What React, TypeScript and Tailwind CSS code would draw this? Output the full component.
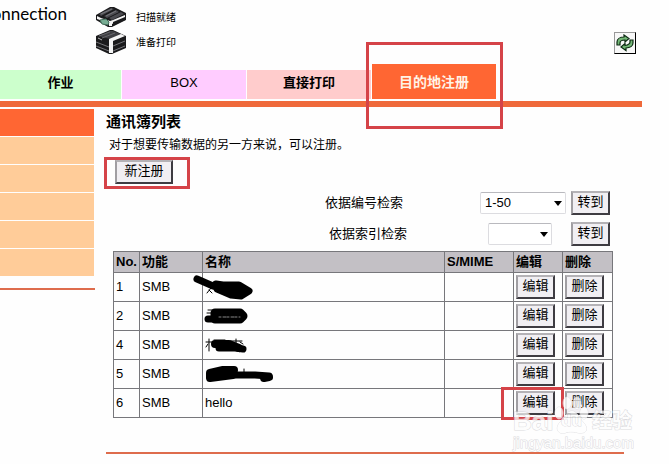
import React from "react";

const BEVEL =
  "border-2 border-t-[#b4b2b6] border-l-[#a09ea2] border-r-[#3e3c42] border-b-[#3e3c42] bg-[#f1eff3] text-[13px] leading-[18px] text-black";

function BevelButton({ children, className = "" }: { children: React.ReactNode; className?: string }) {
  return (
    <button type="button" className={`${BEVEL} h-6 shrink-0 ${className}`}>
      <span className="block h-5 leading-[17px]">{children}</span>
    </button>
  );
}

function ScannerIcon() {
  return (
    <svg width="30" height="21" viewBox="0 0 30 21" aria-hidden="true">
      <path d="M0 8L14 0H18L30 6V13L16 20H12L0 13Z" fill="#1a1a1c" />
      <path d="M3 7L15 1L18 2L5 9ZM8 9L20 3L23 5L11 11ZM13 11L25 5L28 7L16 13Z" fill="#4b4b50" />
      <path d="M5 7L16 2M10 9L20 4" stroke="#77777c" />
      <path d="M1 9L5 11L14 14L17 13L29 8V11L16 17V19L13 19V16L1 12Z" fill="#f5f5f5" />
      <path d="M17 15L29 10V13L17 18Z" fill="#1b1b1d" />
      <path d="M4 13L10 12L13 15L12 18L6 17Z" fill="#78ad94" stroke="#436d5b" />
    </svg>
  );
}

function PrinterIcon() {
  return (
    <svg width="30" height="25" viewBox="0 0 30 25" aria-hidden="true">
      <path d="M0 6L14 0H17L30 6V18L16 24H13L0 18Z" fill="#1a1a1c" />
      <path d="M2 6L14 1H17L27 5L14 9Z" fill="#3e3e42" />
      <path d="M3 6L14 2M6 8L19 3" stroke="#66666b" />
      <path d="M13 9L25 4L29 6L17 11V23H13Z" fill="#f4f4f4" />
      <path d="M0 12L13 17M0 16L13 21M17 16L29 11M17 21L29 16" stroke="#75757a" />
      <path d="M2 8L6 10" stroke="#bbb" />
    </svg>
  );
}

function RefreshIcon() {
  return (
    <svg width="18" height="18" viewBox="0 0 18 18" aria-hidden="true">
      <g fill="#74b877" stroke="#0d2a12" strokeWidth="1.2" strokeLinejoin="miter">
        <path d="M1 11V8C1 5 4 3 8 3V1L13 4.500L9 8V6C6 6 4 7 4 9V11Z" />
        <path d="M17 6V9C17 12 14 14 10 14V16.500L5 13L9 9.500V11.500C12 11 14 10 14 8V6Z" />
      </g>
    </svg>
  );
}

function Dropdown({ id, value, className }: { id: string; value: string; className: string }) {
  return (
    <span className={`relative block shrink-0 ${className}`}>
      <select
        id={id}
        defaultValue={value}
        className="block h-[22px] w-full appearance-none rounded-xs border border-[#dcdce0] border-t-[#b9b9be] bg-white pl-1 text-[13px] leading-5"
      >
        <option value={value}>{value}</option>
      </select>
      <svg className="pointer-events-none absolute top-[9px] right-1" width="8" height="5" viewBox="0 0 8 5" aria-hidden="true">
        <path d="M0 0H8L4 5Z" />
      </svg>
    </span>
  );
}

const SCRIBBLES: Record<string, React.ReactNode> = {
  "1": (
    <>
      <path d="M4 6L20 13" strokeWidth="7" />
      <path d="M23 11L30 12H46L56 18L48 23L38 22L24 16Z" strokeWidth="7" fill="#000" />
      <path d="M14 20L18 15M16 17L19 20" strokeWidth="1" />
    </>
  ),
  "2": (
    <>
      <path d="M22 11H47L50 14L47 17H22Z" strokeWidth="9" fill="#000" />
      <path d="M15 17H30" strokeWidth="7" />
      <path d="M14 11H20M15 8H20" strokeWidth="1" />
      <path d="M26 15H47" stroke="#888" strokeWidth="1" strokeDasharray="2 2 3 1" />
    </>
  ),
  "4": (
    <>
      <path d="M22 13H36L46 17" strokeWidth="8" />
      <path d="M26 17H31L42 17L50 18" strokeWidth="7" />
      <path d="M13 11H19M16 8V20M15 13L13 16M21 9H32M37 10H49M43 8V12M47 11L50 13" strokeWidth="1" />
    </>
  ),
  "5": (
    <>
      <path d="M17 13L30 10H41L40 15L17 18Z" strokeWidth="8" fill="#000" />
      <path d="M38 15H62L76 16" strokeWidth="7" />
      <path d="M71 18L76 17" strokeWidth="8" />
      <path d="M51 9V14" strokeWidth="1" />
    </>
  ),
};

function Scribble({ no }: { no: string }) {
  return (
    <svg
      className="absolute top-0 -left-[10px]"
      width="84"
      height="28"
      viewBox="0 0 84 28"
      fill="none"
      stroke="#000"
      strokeLinecap="round"
      strokeLinejoin="round"
      aria-hidden="true"
    >
      {SCRIBBLES[no]}
    </svg>
  );
}

function Watermark() {
  return (
    <div className="pointer-events-none absolute -top-[23px] -right-[10px] w-[121px] text-[#fdfdfd] opacity-75 [paint-order:stroke] [-webkit-text-stroke:1px_#cfcfd3]">
      <svg className="absolute -top-[12px] left-[40px]" width="36" height="42" viewBox="0 0 36 42" fill="#fff" stroke="#dadadd" aria-hidden="true">
        <ellipse cx="6" cy="18" rx="4" ry="6" />
        <ellipse cx="14" cy="8" rx="4" ry="6" />
        <ellipse cx="24" cy="8" rx="4" ry="6" />
        <ellipse cx="31" cy="18" rx="4" ry="6" />
        <path d="M19 16C14 16 12 22 8 26C1 33 5 40 12 38C17 36 21 37 26 38C34 39 36 33 30 27C26 23 24 16 19 16Z" />
      </svg>
      <div className="relative flex h-[28px] items-center font-bold">
        <span className="w-[48px] text-[26px] leading-[28px]">Bai</span>
        <span className="w-[31px] text-[17px] leading-[28px]">du</span>
        <span className="text-[20px] leading-[28px]">经验</span>
      </div>
      <div className="text-[15px] leading-4">jingyan.baidu.com</div>
    </div>
  );
}

const ENTRIES = [
  { no: "1", name: "" },
  { no: "2", name: "" },
  { no: "4", name: "" },
  { no: "5", name: "" },
  { no: "6", name: "hello" },
];

const TAB = "h-[29px] w-[124px] pb-1 text-[13px]";
const CELL = "border border-[#77777b] p-0 pl-[2px] text-left align-middle";
const HIGHLIGHT = "pointer-events-none absolute border-3 border-[#d54348]";

export default function App() {
  return (
    <div className="min-h-screen overflow-hidden bg-[#fefefe] font-['Liberation_Sans','Noto_Sans_CJK_SC',sans-serif] text-[13px] text-black">
      <header className="flex h-16 items-start pr-[33px]">
        <div className="flex w-[67px] shrink-0 justify-end pt-[2px] font-['Lato','Noto_Sans',sans-serif] text-[17px] leading-6">
          onnection
        </div>
        <ul className="ml-[29px] flex flex-col gap-[2px] pt-[6px] text-[10px]">
          <li className="flex h-[22px] items-center gap-[10px]">
            <ScannerIcon />
            扫描就绪
          </li>
          <li className="flex h-6 items-center gap-[10px]">
            <PrinterIcon />
            准备打印
          </li>
        </ul>
        <button
          type="button"
          aria-label="刷新"
          className="mt-8 ml-auto flex size-[22px] items-center justify-center border border-[#999] border-r-black border-b-black bg-[#f8f8f8]"
        >
          <RefreshIcon />
        </button>
      </header>

      <nav className="mr-[27px] flex items-end gap-px border-b-6 border-[#ef693a] pb-[2px]">
        <button type="button" className="h-[29px] w-[121px] bg-[#ccffcc] pb-1 text-[13px] font-bold">
          作业
        </button>
        <button type="button" className={`${TAB} bg-[#ffccff] font-medium`}>BOX</button>
        <button type="button" className={`${TAB} bg-[#ffcccc] font-bold`}>直接打印</button>
        <div className="relative">
          <button type="button" className="block h-[35px] w-[124px] bg-[#ff6633] text-sm font-bold text-[#fff3e6]">
            目的地注册
          </button>
          <span className={`${HIGHLIGHT} -top-[22px] -right-[7px] -bottom-[30px] -left-[6px]`} />
        </div>
      </nav>

      <div className="flex items-start">
        <aside className="w-[95px] shrink-0 pt-[2px]">
          <ul className="mr-px flex flex-col gap-px border-b border-transparent">
            <li className="h-[27px] bg-[#ff6633]" />
            <li className="h-[27px] bg-[#ffcc99]" />
            <li className="h-[27px] bg-[#ffcc99]" />
            <li className="h-[27px] bg-[#ffcc99]" />
            <li className="h-[27px] bg-[#ffcc99]" />
            <li className="h-[27px] bg-[#ffcc99]" />
          </ul>
          <div className="mt-[11px] h-[2px] bg-[#de6c4c]" />
        </aside>

        <main className="min-w-0 flex-1 pt-1 pr-[45px] pl-[11px]">
          <h1 className="text-[15px] leading-[22px] font-bold">通讯簿列表</h1>
          <p className="pt-[2px] pl-[3px] text-xs leading-5">对于想要传输数据的另一方来说，可以注册。</p>
          <div className="relative mt-[5px] ml-[9px] flex w-[58px]">
            <BevelButton className="w-full">新注册</BevelButton>
            <span className={`${HIGHLIGHT} -top-[3px] -right-[17px] -bottom-[5px] -left-[11px]`} />
          </div>

          <div className="mt-[7px] flex flex-col gap-[7px] pr-[14px]">
            <div className="flex items-center justify-end">
              <label htmlFor="by-number" className="mr-[77px]">依据编号检索</label>
              <Dropdown id="by-number" value="1-50" className="w-[86px]" />
              <BevelButton className="ml-[5px] w-[39px]">转到</BevelButton>
            </div>
            <div className="flex items-center justify-end">
              <label htmlFor="by-index" className="mr-[81px]">依据索引检索</label>
              <Dropdown id="by-index" value="" className="w-16" />
              <BevelButton className="ml-[19px] w-[39px]">转到</BevelButton>
            </div>
          </div>

          <div className="relative mt-[5px] mr-[11px] ml-[7px]">
            <table className="w-full table-fixed border-collapse">
              <colgroup>
                <col className="w-[26px]" />
                <col className="w-[63px]" />
                <col />
                <col className="w-[69px]" />
                <col className="w-[49px]" />
                <col className="w-[50px]" />
              </colgroup>
              <thead>
                <tr className="h-[21px] bg-[#c3c0c5] leading-5">
                  <th className={CELL}>No.</th>
                  <th className={CELL}>功能</th>
                  <th className={CELL}>名称</th>
                  <th className={CELL}>S/MIME</th>
                  <th className={CELL}>编辑</th>
                  <th className={CELL}>删除</th>
                </tr>
              </thead>
              <tbody>
                {ENTRIES.map((entry) => (
                  <tr key={entry.no} className="h-[29px]">
                    <td className={CELL}>{entry.no}</td>
                    <td className={CELL}>SMB</td>
                    <td className={`${CELL} relative`}>
                      {entry.name || <Scribble no={entry.no} />}
                    </td>
                    <td className={CELL} />
                    <td className={CELL}>
                      <div className="relative flex w-[39px]">
                        <BevelButton className="w-full">编辑</BevelButton>
                        {entry.no === "6" && (
                          <span className={`${HIGHLIGHT} -top-1 -right-[9px] -bottom-[5px] -left-[15px]`} />
                        )}
                      </div>
                    </td>
                    <td className={CELL}>
                      <div className="flex w-[39px]">
                        <BevelButton className="w-full">删除</BevelButton>
                      </div>
                    </td>
                  </tr>
                ))}
              </tbody>
            </table>
          </div>

          <footer className="relative mt-[34px] h-[2px] bg-[#de6c4c]">
            <div className="absolute top-[-22px] right-0">
              <Watermark />
            </div>
          </footer>
        </main>
      </div>
    </div>
  );
}
